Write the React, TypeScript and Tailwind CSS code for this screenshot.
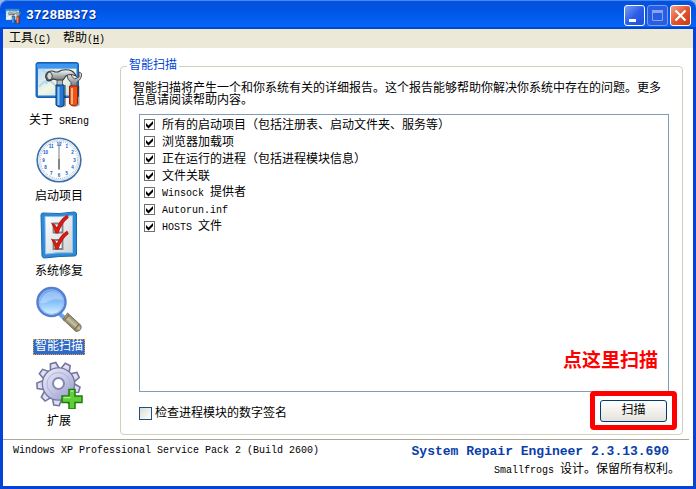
import { useState } from "react";

const scanItems = [
  { cjk: "所有的启动项目（包括注册表、启动文件夹、服务等）" },
  { cjk: "浏览器加载项" },
  { cjk: "正在运行的进程（包括进程模块信息）" },
  { cjk: "文件关联" },
  { latin: "Winsock", cjk: "提供者" },
  { latin: "Autorun.inf" },
  { latin: "HOSTS", cjk: "文件" },
];

const clockMarks = ["12", "1", "2", "3", "4", "5", "6", "7", "8", "9", "10", "11"];

function ToolsIcon({ className }: { className?: string }) {
  return (
    <svg viewBox="0 0 48 48" className={className} aria-hidden="true">
      <defs>
        <linearGradient id="toolsPane" x1="0" y1="0" x2="1" y2="1">
          <stop offset="0" stopColor="#b9dcfa" />
          <stop offset="0.5" stopColor="#f1f8e2" />
          <stop offset="1" stopColor="#b5d8f4" />
        </linearGradient>
        <linearGradient id="toolsMetal" x1="0" y1="0" x2="0" y2="1">
          <stop offset="0" stopColor="#fafafa" />
          <stop offset="1" stopColor="#6a7074" />
        </linearGradient>
      </defs>
      <rect x="1" y="2.5" width="42.5" height="35" rx="2" fill="#1f78d8" stroke="#1b5cae" />
      <path d="M2 4h40v4H2z" fill="#3c97f0" />
      <rect x="3" y="8.500" width="38.500" height="27" fill="url(#toolsPane)" />
      <path d="M4 27q8-10 14-4t10 9M7 9q9 7 4 15" fill="none" stroke="#b5d6ee" strokeWidth="2" />
      <path d="M24 25h7v21q-3 2-6 1zM37 26h7.500v19q-3 3-6 1z" fill="#111" opacity="0.4" />
      <path d="M32 14q0 6 4 8.500V27h6v-5q5-3 4.500-8.500L44 12v5l-4.500 2-3-3 .5-4q-4-1-5 2z" fill="url(#toolsMetal)" stroke="#4b5054" />
      <path d="M34.500 26h8v18q-4 4-8 0z" fill="#f0531a" stroke="#8f2503" />
      <path d="M37 28v16" stroke="#ffb07b" strokeWidth="2" />
      <path d="M22 18h5.500v9H22z" fill="#b5babd" stroke="#44484b" strokeWidth="0.8" />
      <path d="M13 12q4-2 7 0h3q4-3 11-2 5 1 7 6-6-3-10 0l-3 4h-6l-4-1q-4 3-6 1-3-4 1-8z" fill="url(#toolsMetal)" stroke="#34383b" strokeWidth="1.200" />
      <ellipse cx="14.500" cy="16" rx="2.800" ry="3.800" fill="#d6d9db" stroke="#444" />
      <path d="M21 25h8v20q-4 4-8 0z" fill="#2478d2" stroke="#0d3d73" />
      <path d="M23.500 27v18" stroke="#8cc6fa" strokeWidth="2" />
    </svg>
  );
}

function ClockIcon() {
  return (
    <svg viewBox="0 0 48 48" className="size-12" aria-hidden="true">
      <circle cx="24" cy="24" r="21.800" fill="#fff" stroke="#3b6fa8" strokeWidth="1.600" />
      <circle cx="24" cy="24" r="20" fill="none" stroke="#c4d9ec" />
      <circle cx="24" cy="24" r="18.500" fill="none" stroke="#7a94b4" strokeWidth="1" strokeDasharray="0.7 1.237" />
      {clockMarks.map((mark, i) => (
        <text
          key={mark}
          x={24 + 15.5 * Math.sin((i * Math.PI) / 6)}
          y={25.5 - 15.5 * Math.cos((i * Math.PI) / 6)}
          textAnchor="middle"
          fontSize="4.5"
          fontWeight="700"
          fill="#0b55c8"
          fontFamily="Liberation Sans"
        >
          {mark}
        </text>
      ))}
      <path d="M24 7v27" stroke="#8b9096" strokeWidth="1.200" />
      <path d="M24 23v10" stroke="#777" strokeWidth="1.600" />
    </svg>
  );
}

function ChecklistIcon() {
  return (
    <svg viewBox="0 0 48 48" className="size-12" aria-hidden="true">
      <defs>
        <linearGradient id="listPaper" x1="0" y1="0" x2="1" y2="1">
          <stop offset="0" stopColor="#fff" />
          <stop offset="1" stopColor="#cfd2d4" />
        </linearGradient>
      </defs>
      <path d="M8 2q17 1.500 31-1 2.500 0 2.500 2v40q0 2-2 2-15 0-30 2-2 0-2.500-2L6 4q0-2 2-2z" fill="#2e8ad6" stroke="#1969ae" />
      <path d="M10 5.500q14 .8 27.500-.8v37q-14-.5-27 1.300z" fill="url(#listPaper)" stroke="#8bc4ef" />
      <path d="M18.500 12.500h9v9h-9zM18.500 29h9v9h-9z" fill="#fff" stroke="#7e8388" strokeWidth="1.800" />
      <path d="M17 12.500q3 1 5 5Q25 9 32 4.500l1 2Q26 12 23 22h-2q-2-6-4-9.500zM17 28.500q3 1 5 5Q25 25 32 20.500l1 2Q26 28 23 38h-2q-2-6-4-9.500z" fill="#dd2119" stroke="#c0140f" strokeWidth="1.200" />
    </svg>
  );
}

function MagnifierIcon() {
  return (
    <svg viewBox="0 0 48 48" className="size-12" aria-hidden="true">
      <defs>
        <linearGradient id="lens" x1="0" y1="0" x2="0" y2="1">
          <stop offset="0" stopColor="#5d97ea" />
          <stop offset="0.5" stopColor="#86c0fa" />
          <stop offset="1" stopColor="#dcf7ff" />
        </linearGradient>
        <linearGradient id="grip" gradientUnits="userSpaceOnUse" x1="34" y1="40" x2="40" y2="33">
          <stop offset="0" stopColor="#6d6a55" />
          <stop offset="0.5" stopColor="#cbc4a1" />
          <stop offset="1" stopColor="#85806a" />
        </linearGradient>
      </defs>
      <path d="M25 26l7 5-3 4-6-6z" fill="#6f9ee4" />
      <path d="M32.500 27L46 39.500q1 5.500-5 6L28 33.500z" fill="url(#grip)" stroke="#77745f" />
      <path d="M34 29l-4.500 5M44.500 38l-5.500 6" stroke="#8b7444" strokeWidth="1.500" />
      <circle cx="16.500" cy="16" r="14" fill="url(#lens)" stroke="#567fd0" strokeWidth="2.500" />
      <circle cx="16.500" cy="16" r="12.300" fill="none" stroke="#8db8f5" />
      <path d="M5 17Q8 5 18 5q8 1 10 9-9-2-14 1-4 3-9 2z" fill="#fff" opacity="0.3" />
    </svg>
  );
}

function GearIcon() {
  return (
    <svg viewBox="0 0 48 48" className="size-12" aria-hidden="true">
      <defs>
        <linearGradient id="gear" gradientUnits="userSpaceOnUse" x1="8" y1="6" x2="38" y2="40">
          <stop offset="0" stopColor="#eeeefb" />
          <stop offset="0.5" stopColor="#c8c9e8" />
          <stop offset="1" stopColor="#9092bf" />
        </linearGradient>
      </defs>
      <g stroke="#74769e" strokeWidth="1.600" fill="url(#gear)">
        {[0, 40, 80, 120, 160, 200, 240, 280, 320].map((angle) => (
          <path key={angle} d="M19 8l1.500-6.500h5.500L28 8z" transform={`rotate(${angle - 14} 23.500 23)`} />
        ))}
        <circle cx="23.500" cy="23" r="16" />
      </g>
      <circle cx="23.500" cy="23" r="15.400" fill="url(#gear)" />
      <circle cx="23.500" cy="23" r="11.500" fill="none" stroke="#b2b4da" />
      <circle cx="23.500" cy="22.500" r="5.500" fill="#fff" stroke="#8587b3" strokeWidth="2" />
      <path d="M34 28.500h6v6.500h7v6.500h-7V48h-6v-6.500h-7V35h7z" fill="#5fce38" stroke="#1f7d0c" strokeWidth="1.500" />
      <path d="M35.500 30h3M28.500 36.500h7" stroke="#a8f286" strokeWidth="1.500" />
    </svg>
  );
}

const navItems = [
  { label: "关于", latin: "SREng", icon: <ToolsIcon className="size-12" /> },
  { label: "启动项目", icon: <ClockIcon /> },
  { label: "系统修复", icon: <ChecklistIcon /> },
  { label: "智能扫描", icon: <MagnifierIcon /> },
  { label: "扩展", icon: <GearIcon /> },
];

function TitleBar() {
  const control = "flex size-[21px] items-center justify-center rounded-[3px] border border-white";
  return (
    <header className="flex h-[29px] shrink-0 items-center gap-[5px] rounded-t-lg bg-linear-to-b from-[#0a4fd8] via-[#0054e3] via-30% to-[#0468fc] px-[5px] pt-[2px] shadow-[inset_0_1px_0_#3a8cf8,inset_0_-2px_0_#0046cf]">
      <ToolsIcon className="size-4" />
      <h1 className="flex-1 text-[13px] leading-4 font-bold text-white text-shadow-[1px_1px_0_#0a2a8c]">
        3728BB373
      </h1>
      <div className="flex gap-[2px]">
        <button aria-label="最小化" className={`${control} bg-linear-to-br from-[#7b9cf3] via-[#2e5ee8] to-[#1c50df]`}>
          <svg viewBox="0 0 19 19" className="size-full"><path d="M4 13h7v3H4z" fill="#fff" /></svg>
        </button>
        <button aria-label="最大化" disabled className="flex size-[21px] items-center justify-center rounded-[3px] border border-[#7c9cf0] bg-[#2a5ee2]">
          <svg viewBox="0 0 19 19" className="size-full"><path d="M4.500 4.500h10v10h-10z" fill="none" stroke="#8aa3ef" /><path d="M4 4h11v3H4z" fill="#8aa3ef" /></svg>
        </button>
        <button aria-label="关闭" className={`${control} bg-linear-to-br from-[#f0a08a] via-[#e3532d] to-[#c93a10]`}>
          <svg viewBox="0 0 19 19" className="size-full"><path d="M4.500 4.500l10 10M14.500 4.500l-10 10" stroke="#fff" strokeWidth="2.300" /></svg>
        </button>
      </div>
    </header>
  );
}

function CheckBox({ id, defaultChecked = false }: { id: string; defaultChecked?: boolean }) {
  return (
    <span className="grid size-[11px] shrink-0">
      <input
        id={id}
        type="checkbox"
        defaultChecked={defaultChecked}
        className="peer col-start-1 row-start-1 size-[11px] appearance-none border border-[#6f6f6f] bg-white"
      />
      <svg viewBox="0 0 11 11" className="pointer-events-none invisible col-start-1 row-start-1 size-[11px] peer-checked:visible" aria-hidden="true">
        <path d="M2 4v3l2.500 2.500L9 5V2L4.500 6.500z" fill="#000" />
      </svg>
    </span>
  );
}

export default function App() {
  const [active, setActive] = useState(3);

  return (
    <div className="flex min-h-screen flex-col bg-[#9db7e8] text-[12px] leading-[12px] text-black [font-family:'Liberation_Mono','Noto_Sans_CJK_SC',monospace]">
      <TitleBar />

      <div className="flex flex-1 flex-col border-x-[3px] border-b-[3px] border-[#0442d8] bg-white">
        <nav className="flex h-[19px] shrink-0 items-center gap-[12px] bg-[#ece9d8] px-[6px] pt-[2px]">
          <button>工具<span className="text-[10px]">(<u>C</u>)</span></button>
          <button>帮助<span className="text-[10px]">(<u>H</u>)</span></button>
        </nav>

        <main className="flex flex-1 gap-[5px] pr-[10px] pb-[4px]">
          {/* Sidebar */}
          <aside className="flex w-28 shrink-0 flex-col gap-[6px] pt-[12px]">
            {navItems.map((item, i) => (
              <button key={item.label} onClick={() => setActive(i)} className="flex flex-col items-center gap-[5px]">
                {item.icon}
                <span className={i === active ? "bg-[#316ac5] px-[2px] py-[1px] leading-[14px] text-white outline-1 -outline-offset-1 outline-dotted outline-[#e09a3a]" : "px-[2px] py-[1px] leading-[14px]"}>
                  {item.label}
                  {item.latin && <span className="text-[10px]"> {item.latin}</span>}
                </span>
              </button>
            ))}
          </aside>

          {/* Smart scan panel */}
          <div className="flex min-w-0 flex-1 pt-[11px]">
            <fieldset className="flex min-w-0 flex-1 flex-col rounded-[4px] border border-[#d0d0bf] px-[12px] pb-[12px]">
              <legend className="-ml-[6px] px-[2px] leading-[14px] text-[#0046d5]">智能扫描</legend>
              <p className="pt-[10px]">
                智能扫描将产生一个和你系统有关的详细报告。这个报告能够帮助你解决你系统中存在的问题。更多信息请阅读帮助内容。
              </p>

              <div className="relative mt-[7px] mr-px ml-[6px] flex-1 border border-[#7f9db9] pt-px pl-[4px]">
                <ul>
                  {scanItems.map((item, i) => (
                    <li key={i} className="flex h-[17px] items-center gap-[7px]">
                      <CheckBox id={`scan-${i}`} defaultChecked />
                      <label htmlFor={`scan-${i}`} className="pt-[2px]">
                        {item.latin && <span className="text-[10px]">{item.latin} </span>}
                        {item.cjk}
                      </label>
                    </li>
                  ))}
                </ul>
                <p className="absolute right-[10px] bottom-[18px] text-[19px] leading-[22px] font-bold text-[#ff0000]">点这里扫描</p>
              </div>

              <div className="mt-[8px] mr-px ml-[6px] flex items-center justify-between">
                <div className="flex items-center gap-[3px] pt-[4px]">
                  <input id="signature" type="checkbox" className="size-[13px] appearance-none border border-[#1c5180] bg-linear-to-br from-[#dcdcd7] to-white" />
                  <label htmlFor="signature" className="pt-[2px]">检查进程模块的数字签名</label>
                </div>
                <div className="relative mr-[2px]">
                  <button className="block h-[22px] w-[67px] rounded-[3px] border border-[#003c74] bg-linear-to-b from-white to-[#e5e3da]">扫描</button>
                  <div className="pointer-events-none absolute -inset-x-[10px] -top-[9px] -bottom-[8px] rounded-[4px] border-[5px] border-[#ff0000]" />
                </div>
              </div>
            </fieldset>
          </div>
        </main>

        <footer className="mr-[4px] flex h-[47px] shrink-0 justify-between border-t border-[#aca899] pt-[4px] pr-[9px] pl-[10px]">
          <p className="text-[10px] leading-[14px]">Windows XP Professional Service Pack 2 (Build 2600)</p>
          <div className="text-right">
            <p className="pr-[11px] text-[13px] leading-[16px] font-bold text-[#0a3ea8]">System Repair Engineer 2.3.13.690</p>
            <p className="leading-[20px]"><span className="text-[10px]">Smallfrogs </span>设计。保留所有权利。</p>
          </div>
        </footer>
      </div>
    </div>
  );
}
